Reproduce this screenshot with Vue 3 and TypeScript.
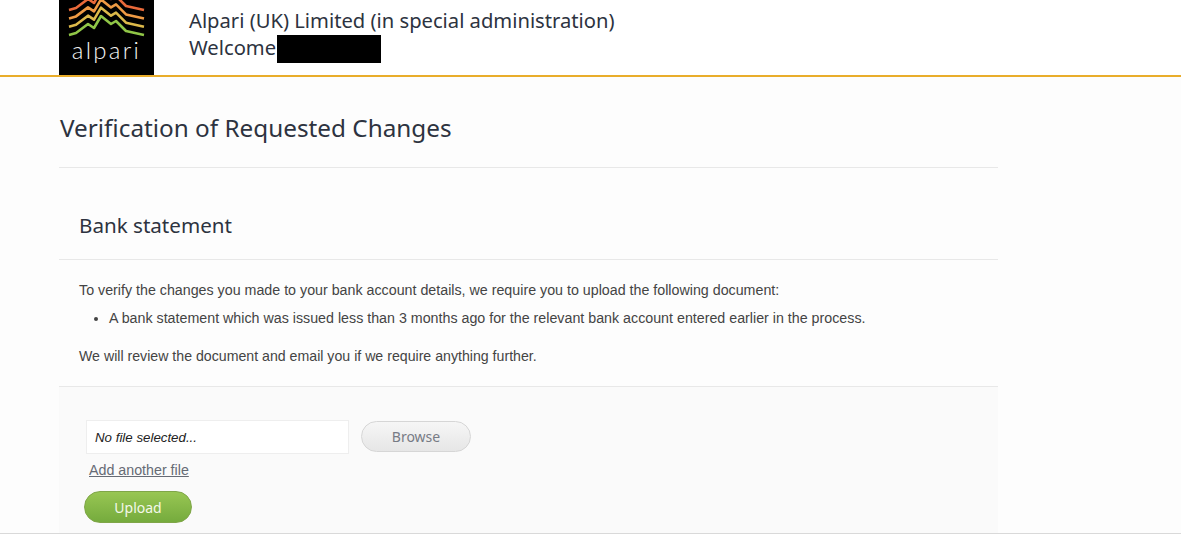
<script setup lang="ts">
// top line is cut off by the edge of the logo box, as in the original
const waves = [
  { color: '#ea6a3a', y: -25 },
  { color: '#ee9a44', y: -16.6 },
  { color: '#dcb94a', y: -8.3 },
  { color: '#90c647', y: 0 },
];

const wavePath = (y: number) =>
  `M10 ${35 + y} L17 ${33 + y} L29 ${24 + y} L35 ${28 + y} L42 ${16 + y} L52 ${24 + y} L57 ${21 + y} L67 ${31 + y} L76 ${33 + y} L85 ${35 + y}`;
</script>

<template>
  <div class="page">
    <header class="topbar">
      <div class="logo">
        <svg class="logo-waves" width="95" height="45" viewBox="0 0 95 45">
          <path
            v-for="w in waves"
            :key="w.color"
            :d="wavePath(w.y)"
            fill="none"
            :stroke="w.color"
            stroke-width="2.6"
            stroke-linejoin="round"
          />
        </svg>
        <span class="logo-text">alpari</span>
      </div>
      <div class="topbar-text">
        <div>Alpari (UK) Limited (in special administration)</div>
        <div class="welcome">Welcome<span class="redacted"></span></div>
      </div>
    </header>

    <main class="content">
      <h1>Verification of Requested Changes</h1>
      <section class="card">
        <h2>Bank statement</h2>
        <div class="body-text">
          <p>To verify the changes you made to your bank account details, we require you to upload the following document:</p>
          <ul>
            <li>A bank statement which was issued less than 3 months ago for the relevant bank account entered earlier in the process.</li>
          </ul>
          <p class="note">We will review the document and email you if we require anything further.</p>
        </div>
        <div class="upload-panel">
          <div class="file-row">
            <div class="file-input">No file selected...</div>
            <button type="button" class="btn-browse">Browse</button>
          </div>
          <a href="#" class="add-file">Add another file</a>
          <button type="button" class="btn-upload">Upload</button>
        </div>
      </section>
    </main>
  </div>
</template>

<style>
html, body {
  margin: 0;
  background: #fff;
}
</style>

<style scoped>
.page {
  height: 533px;
  overflow: hidden;
  background: #fdfdfd;
  border-bottom: 1px solid #d9d9d9;
  font-family: "Liberation Sans", Arial, sans-serif;
  color: #444;
}

.topbar {
  height: 75px;
  display: flex;
  gap: 35px;
  padding-left: 59px;
  background: #fff;
  border-bottom: 2px solid #e9ad2b;
}

.logo {
  width: 95px;
  height: 75px;
  background: #000;
  position: relative;
  flex: none;
}

.logo-waves {
  position: absolute;
  left: 0;
  top: 0;
}

.logo-text {
  position: absolute;
  left: 0;
  right: 0;
  top: 35px;
  text-align: center;
  color: #f2f2f2;
  font-family: Lato, sans-serif;
  font-size: 24px;
  line-height: 30px;
  font-weight: 300;
  letter-spacing: 2.3px;
}

.topbar-text {
  font-family: "Noto Sans", sans-serif;
  font-size: 20.2px;
  line-height: 27px;
  color: #2d3340;
  padding-top: 7px;
}

.welcome {
  display: flex;
  align-items: flex-start;
}

.redacted {
  display: block;
  width: 104px;
  height: 28px;
  background: #000;
  margin-left: 1px;
  margin-top: 1px;
}

.content {
  width: 939px;
  margin-left: 59px;
}

h1 {
  margin: 0;
  height: 91px;
  box-sizing: border-box;
  padding: 33px 0 0 1px;
  font-family: "Noto Sans", sans-serif;
  font-size: 24.3px;
  line-height: 36px;
  font-weight: 400;
  color: #2d3340;
  border-bottom: 1px solid #e8e8e8;
}

h2 {
  margin: 0;
  height: 92px;
  box-sizing: border-box;
  padding: 43px 0 0 20px;
  font-family: "Noto Sans", sans-serif;
  font-size: 20.6px;
  line-height: 28px;
  font-weight: 400;
  color: #2d3340;
  border-bottom: 1px solid #e8e8e8;
}

.body-text {
  height: 126px;
  box-sizing: border-box;
  padding: 20px 20px 0;
  font-size: 14.25px;
  line-height: 20px;
}

.body-text p {
  margin: 0;
}

.body-text .note {
  font-size: 14.17px;
}

.body-text ul {
  margin: 8px 0 18px;
  padding-left: 30px;
}

.upload-panel {
  height: 147px;
  box-sizing: border-box;
  background: #fafafa;
  border-top: 1px solid #e8e8e8;
  padding: 33px 0 0 25px;
  display: flex;
  flex-direction: column;
  align-items: flex-start;
}

.file-row {
  display: flex;
  align-items: flex-start;
  margin-left: 2px;
  gap: 12px;
}

.file-input {
  width: 253px;
  height: 32px;
  line-height: 33px;
  padding-left: 8px;
  background: #fff;
  border: 1px solid #eee;
  font-size: 13.3px;
  font-style: italic;
  color: #222;
}

.btn-browse {
  width: 110px;
  height: 31px;
  margin-top: 1px;
  border-radius: 16px;
  border: 1px solid #d6d6d6;
  background: linear-gradient(#f6f6f6, #e6e6e6);
  color: #777b85;
  font-family: "Noto Sans", sans-serif;
  font-size: 14px;
  padding: 0;
}

.add-file {
  margin: 7px 0 0 5px;
  font-size: 14.25px;
  line-height: 18px;
  color: #666b75;
  text-decoration: underline;
}

.btn-upload {
  margin-top: 12px;
  width: 108px;
  height: 32px;
  border-radius: 16px;
  border: 1px solid #7fa648;
  background: linear-gradient(#98c653, #75ab3d);
  color: #f4f8ea;
  font-family: "Noto Sans", sans-serif;
  font-size: 14px;
  padding: 0;
}
</style>
